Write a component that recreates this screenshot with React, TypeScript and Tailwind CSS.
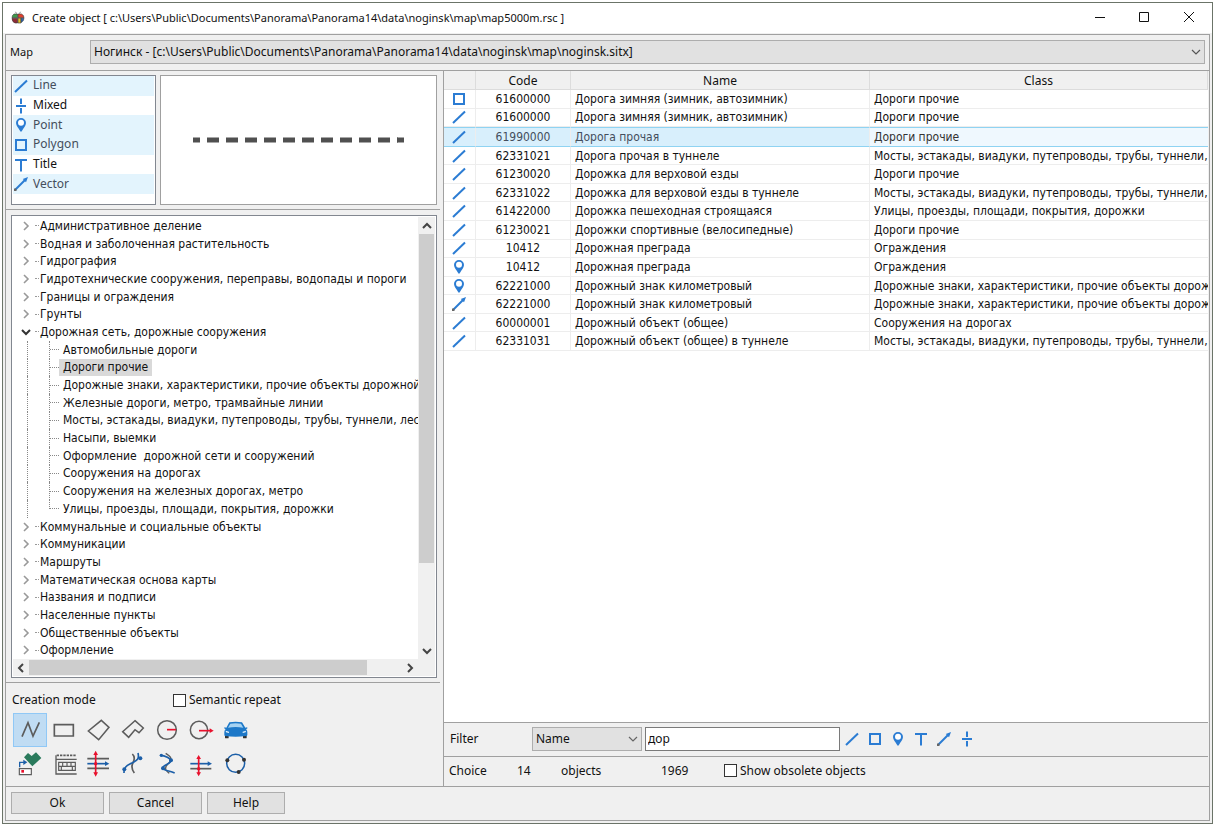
import { useState } from "react";
import type { ReactNode } from "react";
import clsx from "clsx";

type Kind = "line" | "mixed" | "point" | "polygon" | "title" | "vector";

const kinds: { kind: Kind; label: string; active: boolean }[] = [
  { kind: "line", label: "Line", active: true },
  { kind: "mixed", label: "Mixed", active: false },
  { kind: "point", label: "Point", active: true },
  { kind: "polygon", label: "Polygon", active: true },
  { kind: "title", label: "Title", active: false },
  { kind: "vector", label: "Vector", active: true },
];

const layers: { name: string; children?: string[] }[] = [
  { name: "Административное деление" },
  { name: "Водная и заболоченная растительность" },
  { name: "Гидрография" },
  { name: "Гидротехнические сооружения, переправы, водопады и пороги" },
  { name: "Границы и ограждения" },
  { name: "Грунты" },
  {
    name: "Дорожная сеть, дорожные сооружения",
    children: [
      "Автомобильные дороги",
      "Дороги прочие",
      "Дорожные знаки, характеристики, прочие объекты дорожной сети",
      "Железные дороги, метро, трамвайные линии",
      "Мосты, эстакады, виадуки, путепроводы, трубы, туннели, лестницы",
      "Насыпи, выемки",
      "Оформление  дорожной сети и сооружений",
      "Сооружения на дорогах",
      "Сооружения на железных дорогах, метро",
      "Улицы, проезды, площади, покрытия, дорожки",
    ],
  },
  { name: "Коммунальные и социальные объекты" },
  { name: "Коммуникации" },
  { name: "Маршруты" },
  { name: "Математическая основа карты" },
  { name: "Названия и подписи" },
  { name: "Населенные пункты" },
  { name: "Общественные объекты" },
  { name: "Оформление" },
];

const bridges = "Мосты, эстакады, виадуки, путепроводы, трубы, туннели, лестницы";
const signs = "Дорожные знаки, характеристики, прочие объекты дорожной сети";

const objects: { kind: Kind; code: string; name: string; cls: string }[] = [
  { kind: "polygon", code: "61600000", name: "Дорога зимняя (зимник, автозимник)", cls: "Дороги прочие" },
  { kind: "line", code: "61600000", name: "Дорога зимняя (зимник, автозимник)", cls: "Дороги прочие" },
  { kind: "line", code: "61990000", name: "Дорога прочая", cls: "Дороги прочие" },
  { kind: "line", code: "62331021", name: "Дорога прочая в туннеле", cls: bridges },
  { kind: "line", code: "61230020", name: "Дорожка для верховой езды", cls: "Дороги прочие" },
  { kind: "line", code: "62331022", name: "Дорожка для верховой езды в туннеле", cls: bridges },
  { kind: "line", code: "61422000", name: "Дорожка пешеходная строящаяся", cls: "Улицы, проезды, площади, покрытия, дорожки" },
  { kind: "line", code: "61230021", name: "Дорожки спортивные (велосипедные)", cls: "Дороги прочие" },
  { kind: "line", code: "10412", name: "Дорожная преграда", cls: "Ограждения" },
  { kind: "point", code: "10412", name: "Дорожная преграда", cls: "Ограждения" },
  { kind: "point", code: "62221000", name: "Дорожный знак километровый", cls: signs },
  { kind: "vector", code: "62221000", name: "Дорожный знак километровый", cls: signs },
  { kind: "line", code: "60000001", name: "Дорожный объект (общее)", cls: "Сооружения на дорогах" },
  { kind: "line", code: "62331031", name: "Дорожный объект (общее) в туннеле", cls: bridges },
];

const filterKinds: Kind[] = ["line", "polygon", "point", "title", "vector", "mixed"];

function KindIcon({ kind }: { kind: Kind }) {
  return (
    <svg viewBox="0 0 16 16" className="h-4 w-4 shrink-0" fill="none" stroke="#2b7cd3" strokeWidth="2">
      {kind === "line" && <path d="M2 14 14 2.500" />}
      {kind === "mixed" && <path d="M8 .5v5.500M3 8h10M8 10v5.500" />}
      {kind === "point" && (
        <>
          <path d="M8 1a5 5 0 0 0-5 5c0 3 2.700 5 3.800 7.500L8 15l1.200-1.500C10.300 11 13 9 13 6a5 5 0 0 0-5-5Z" fill="#2b7cd3" stroke="none" />
          <circle cx="8" cy="5.800" r="3" fill="#fff" stroke="none" />
        </>
      )}
      {kind === "polygon" && <path d="M3 3h10v10H3z" />}
      {kind === "title" && <path d="M2 3h12M8 3v11.500" />}
      {kind === "vector" && (
        <>
          <path d="M2.500 13.500 12 4" />
          <path d="M15 1 9.800 3l3.200 3.200z" fill="#2b7cd3" stroke="none" />
          <path d="M1 12.500h2.500V15H1z" fill="#666" stroke="none" />
        </>
      )}
    </svg>
  );
}

const gray = "#5c5c5c";
const red = "#e8112d";
const blue = "#1c5fa8";

const tools: { label: string; icon: ReactNode }[] = [
  {
    label: "Polyline",
    icon: <path d="M27 71 45 29l15 40 19-41" stroke={gray} strokeWidth="5" />,
  },
  { label: "Rectangle", icon: <path d="M22 35h57v34H22z" stroke={gray} strokeWidth="5" /> },
  { label: "Inclined rectangle", icon: <path d="m61 22 23 21-31 37-31-26z" stroke={gray} strokeWidth="4.500" /> },
  {
    label: "Complex rectangle",
    icon: <path d="m60 23 25 22-13 14-12-9-19 23-18-17z" stroke={gray} strokeWidth="4.500" />,
  },
  {
    label: "Circle",
    icon: (
      <>
        <circle cx="54" cy="51" r="28" stroke={gray} strokeWidth="4.500" />
        <path d="M54 50h27" stroke={red} strokeWidth="5" />
      </>
    ),
  },
  {
    label: "Circle by radius",
    icon: (
      <>
        <circle cx="48" cy="51" r="26" stroke={gray} strokeWidth="4.500" />
        <path d="M48 53h36" stroke={red} strokeWidth="5" />
        <path d="m92 53-12-7v14z" fill={red} />
      </>
    ),
  },
  {
    label: "Route",
    icon: (
      <>
        <path d="M24 66h11v8q0 2-2 2h-7q-2 0-2-2zM78 66h11v8q0 2-2 2h-7q-2 0-2-2z" fill="#333" />
        <path
          d="M37 28q19-3 38 0l10 16 5-1q3 2 0 4l-3 1q4 4 4 9v9q0 3-4 3-31 5-62 0-3 0-3-3v-9q0-5 4-9l-3-1q-3-2 0-4l5 1z"
          fill="#1d78c8"
        />
        <path d="M40 32q16-2 32 0l7 12q-23-4-46 0z" fill="#a5d2f2" />
        <path d="M26 53l10 3v4l-9-2zM87 53l-10 3v4l9-2z" fill="#e8f4fc" />
      </>
    ),
  },
  {
    label: "By template",
    icon: (
      <>
        <path d="m33 31 12-13 11 9 13-11 16 17-27 25z" fill="#2a7a5c" />
        <path d="M20 61V46h13" stroke={blue} strokeWidth="4" />
        <path d="m43 46-12-8v16z" fill={blue} />
        <path d="M19 65h36v18H19z" fill="#fff" stroke={gray} strokeWidth="3.500" />
        <path d="M25 69h8v8h-8z" fill={red} />
      </>
    ),
  },
  {
    label: "Keyboard input",
    icon: (
      <>
        <path d="M29 25h60" stroke={gray} strokeWidth="5" strokeDasharray="7 3" />
        <path d="M27 25v58M27 37h62M27 81h62" stroke={gray} strokeWidth="4" />
        <path d="M35 46h50v24H35zM35 58h50M47 46v12M60 46v12M72 46v12M43 58v12M76 58v12" stroke={gray} strokeWidth="3.500" />
      </>
    ),
  },
  {
    label: "Parallel lines",
    icon: (
      <>
        <path d="M19 35h65M19 64h65" stroke={gray} strokeWidth="5" />
        <path d="M19 50h56" stroke={blue} strokeWidth="5" />
        <path d="m85 50-13-7v14z" fill={blue} />
        <path d="M44 20v61" stroke={red} strokeWidth="5" />
        <path d="m44 11-7 13h14zM44 89l-7-13h14z" fill={red} />
        <circle cx="44" cy="50" r="5" fill={red} />
      </>
    ),
  },
  {
    label: "Copy of contour",
    icon: (
      <>
        <path d="M52 21c10 9 6 18 2 26s-6 18 4 31" stroke={gray} strokeWidth="5" />
        <path d="M27 78C26 58 38 55 51 48S74 38 69 18" stroke={blue} strokeWidth="5" />
        <circle cx="28" cy="67" r="6" fill={blue} />
        <circle cx="76" cy="34" r="6" fill={blue} />
      </>
    ),
  },
  {
    label: "Smoothed contour",
    icon: (
      <>
        <path d="M50 19c12 8 20 12 13 25-6 9-18 12-12 25 3 5 7 7 10 10" stroke={gray} strokeWidth="4" />
        <path d="M34 25c14 0 32 10 31 17-2 11-22 10-24 21 3 8 20 8 36 15" stroke={blue} strokeWidth="5" />
        <circle cx="37" cy="25" r="5" fill={blue} />
        <circle cx="66" cy="40" r="6" fill={blue} />
        <circle cx="42" cy="64" r="6" fill={blue} />
      </>
    ),
  },
  {
    label: "Parallel line",
    icon: (
      <>
        <path d="M22 65h63" stroke={gray} strokeWidth="5" />
        <path d="M22 50h56" stroke={blue} strokeWidth="5" />
        <path d="m87 50-13-7v14z" fill={blue} />
        <path d="M47 30v48" stroke={red} strokeWidth="5" />
        <path d="m47 24-7 12h14zM47 88l-7-12h14z" fill={red} />
        <circle cx="47" cy="65" r="5" fill={red} />
      </>
    ),
  },
  {
    label: "Circle by three points",
    icon: (
      <>
        <circle cx="56" cy="49" r="27" stroke={blue} strokeWidth="4.500" />
        <circle cx="31" cy="40" r="6" fill="#333" />
        <circle cx="81" cy="38" r="6" fill="#333" />
        <circle cx="65" cy="75" r="6" fill="#333" />
      </>
    ),
  },
];

function Chevron({ d, className }: { d: string; className?: string }) {
  return (
    <svg viewBox="0 0 10 10" className={clsx("h-[10px] w-[10px] shrink-0", className)} fill="none" stroke="currentColor">
      <path d={d} />
    </svg>
  );
}

const down = "M1 3 5 7l4-4";
const up = "M1 7 5 3l4 4";
const left = "M7 1 3 5l4 4";
const right = "M3 1l4 4-4 4";

function AppLogo() {
  return (
    <svg viewBox="0 0 14 14" className="h-[14px] w-[14px]" stroke="#3a3a3a" strokeWidth=".6">
      <path d="M4.500 .8 5.500 2.500M9.500 .8 8.500 2.500" />
      <path d="M3 3h3.500v3.800H1Q1 4 3 3Z" fill="#3f9a4c" />
      <path d="M7 3h3.500Q13 4 13 6.800H7Z" fill="#e0402f" />
      <path d="M1 7.200h5.600V12H4Q1 11 1 7.200Z" fill="#8e2b36" />
      <path d="M7 7.200h3V12H7Z" fill="#e9c32c" />
      <path d="M10 7.200h3Q13 10 10 11.500Z" fill="#2c66b5" />
    </svg>
  );
}

function TitleBar() {
  return (
    <header className="flex h-[30px] shrink-0 items-center bg-white pl-2">
      <AppLogo />
      <h1 className="ml-[7px] flex-1 truncate pb-px font-['Noto_Sans',sans-serif] text-[11px]">
        Create object [ c:\Users\Public\Documents\Panorama\Panorama14\data\noginsk\map\map5000m.rsc ]
      </h1>
      <button aria-label="Minimize" className="flex w-11 justify-center">
        <svg viewBox="0 0 12 12" className="h-3 w-3" stroke="#111"><path d="M1 5.500h10" /></svg>
      </button>
      <button aria-label="Maximize" className="flex w-11 justify-center">
        <svg viewBox="0 0 12 12" className="h-3 w-3" fill="none" stroke="#111"><path d="M1.500 .5h9v9h-9z" /></svg>
      </button>
      <button aria-label="Close" className="flex w-[46px] justify-center">
        <svg viewBox="0 0 12 12" className="h-3 w-3" stroke="#111"><path d="m1 0 10 10M11 0 1 10" /></svg>
      </button>
    </header>
  );
}

function LayerTree({ selected, onSelect }: { selected: string; onSelect: (name: string) => void }) {
  return (
    <div className="flex min-h-0 flex-1 flex-col border border-[#828790] bg-white p-px">
      <div className="flex min-h-0 flex-1">
        <ul className="flex h-[442px] min-w-0 flex-1 flex-col overflow-hidden whitespace-pre">
          {layers.flatMap((layer) => [
            <li key={layer.name} className="flex min-h-0 flex-1 items-center">
              <button className="flex items-center">
                <Chevron
                  d={layer.children ? down : right}
                  className={clsx("ml-2", layer.children ? "text-[#333] stroke-2" : "text-[#999] stroke-[1.6]")}
                />
                <span className="mr-px ml-1 w-1 border-t border-dotted border-[#999]" />
                {layer.name}
              </button>
            </li>,
            ...(layer.children ?? []).map((child, i, all) => (
              <li key={child} className="flex min-h-0 flex-1 items-center">
                <span className="ml-[14px] w-[22px] shrink-0 self-stretch border-l border-dotted border-[#888]" />
                <span
                  className={clsx(
                    "w-px shrink-0 border-l border-dotted border-[#888]",
                    i === all.length - 1 ? "h-1/2 self-start" : "self-stretch",
                  )}
                />
                <span className="w-[9px] shrink-0 border-t border-dotted border-[#888]" />
                <button
                  onClick={() => onSelect(child)}
                  className={clsx("h-full px-1 leading-4", child === selected && "bg-[#d9d9d9]")}
                >
                  {child}
                </button>
              </li>
            )),
          ])}
        </ul>
        <div className="flex w-[17px] flex-col items-center bg-[#f0f0f0] text-[#444]">
          <Chevron d={up} className="mt-1 mb-[3px] stroke-2" />
          <div className="h-[329px] w-[15px] bg-[#cdcdcd]" />
          <Chevron d={down} className="mt-auto mb-[3px] stroke-2" />
        </div>
      </div>
      <div className="flex h-[17px] shrink-0 items-center bg-[#f0f0f0] pr-5 pl-[3px] text-[#444]">
        <Chevron d={left} className="stroke-2" />
        <div className="ml-[3px] h-[15px] w-[338px] bg-[#cdcdcd]" />
        <Chevron d={right} className="ml-auto stroke-2" />
      </div>
    </div>
  );
}

function CreationMode() {
  const [tool, setTool] = useState("Polyline");

  return (
    <section className="h-[103px] shrink-0 pt-[6px] pl-[6px]">
      <div className="mb-[2px] flex h-[22px] items-center font-['Noto_Sans',sans-serif]">
        <span className="w-[161px]">Creation mode</span>
        <label className="flex items-center gap-[3px]">
          <input type="checkbox" className="h-[13px] w-[13px] appearance-none border border-[#333] bg-white" />
          Semantic repeat
        </label>
      </div>
      <div className="ml-px grid w-[238px] grid-cols-7">
        {tools.map(({ label, icon }) => (
          <button
            key={label}
            aria-label={label}
            aria-pressed={tool === label}
            onClick={() => setTool(label)}
            className={clsx("h-[34px] w-[34px]", tool === label && "bg-[#c0dcf3] outline -outline-offset-1 outline-[#90c8f6]")}
          >
            <svg viewBox="0 0 102 102" className="h-[34px] w-[34px]" fill="none">
              {icon}
            </svg>
          </button>
        ))}
      </div>
    </section>
  );
}

function ObjectTable({ selected, onSelect }: { selected: number; onSelect: (index: number) => void }) {
  return (
    <div className="min-h-0 flex-1 overflow-hidden bg-white">
      <table className="h-[280px] w-full table-fixed border-separate border-spacing-0">
        <colgroup>
          <col className="w-8" />
          <col className="w-[95px]" />
          <col className="w-[299px]" />
          <col />
        </colgroup>
        <thead>
          <tr className="h-[19px] bg-[#f0f0f0] font-['Noto_Sans',sans-serif] leading-[17px]">
            {["", "Code", "Name", "Class"].map((title) => (
              <th key={title} className="h-[19px] border-r border-b border-[#dcdcdc] p-0 font-normal">
                {title}
              </th>
            ))}
          </tr>
        </thead>
        <tbody>
          {objects.map((item, i) => {
            const active = i === selected;
            const cell = active ? "border-y border-[#8fd3f2] bg-[#d8effc] text-[#444e5c]" : "border-b border-b-[#ededed]";
            return (
              <tr key={i} onClick={() => onSelect(i)} className="leading-4">
                <td className={clsx("border-r border-r-[#ededed] p-0", cell)}>
                  <div className="flex justify-center pr-px"><KindIcon kind={item.kind} /></div>
                </td>
                <td className={clsx("border-r border-r-[#ededed] p-0 text-center", cell)}>{item.code}</td>
                <td className={clsx("truncate border-r border-r-[#ededed] p-0 pl-1", cell)}>{item.name}</td>
                <td
                  className={clsx(
                    "overflow-hidden p-0 pl-1 whitespace-nowrap",
                    active ? "border-y border-[#8fd3f2] bg-[#eff8fe] text-[#333]" : cell,
                  )}
                >
                  {item.cls}
                </td>
              </tr>
            );
          })}
        </tbody>
      </table>
    </div>
  );
}

export default function App() {
  const [layer, setLayer] = useState("Дороги прочие");
  const [row, setRow] = useState(2);
  const [filter, setFilter] = useState("дор");

  return (
    <div className="h-screen bg-white p-[2px] font-['DejaVu_Sans_Condensed','DejaVu_Sans',sans-serif] text-[12px] leading-4 text-[#111]">
      <div className="flex h-full flex-col border border-[#6b7468] bg-[#f0f0f0]">
        <TitleBar />
        <main className="mx-[2px] mt-px mb-[2px] flex min-h-0 flex-1 flex-col border border-[#a0a0a0]">
          <div className="flex h-9 shrink-0 items-center border-b border-[#a0a0a0] pr-1 pb-px pl-1">
            <label htmlFor="map" className="w-20 font-['Noto_Sans',sans-serif] text-[11px]">Map</label>
            <div className="relative flex-1">
              <select
                id="map"
                className="block h-6 w-full appearance-none border border-[#adadad] bg-[#e1e1e1] pl-[3px] font-['Noto_Sans',sans-serif]"
              >
                <option>Ногинск - [c:\Users\Public\Documents\Panorama\Panorama14\data\noginsk\map\noginsk.sitx]</option>
              </select>
              <Chevron d={down} className="pointer-events-none absolute top-[7px] right-1 text-[#555] stroke-[1.2]" />
            </div>
          </div>

          <div className="flex min-h-0 flex-1">
            <aside className="flex w-[437px] shrink-0 flex-col pr-[3px]">
              <section className="flex h-[139px] shrink-0 gap-1 border-b border-[#a0a0a0] pt-1 pr-[3px] pb-1 pl-[5px]">
                <ul className="flex w-[145px] flex-col border border-[#828790] bg-white px-px pb-[10px] font-['Noto_Sans',sans-serif]">
                  {kinds.map(({ kind, label, active }) => (
                    <li
                      key={kind}
                      className={clsx("flex flex-1 items-center gap-1", active && "bg-[#e3f4fd] text-[#444e5c]")}
                    >
                      <KindIcon kind={kind} />
                      <span className="pb-px">{label}</span>
                    </li>
                  ))}
                </ul>
                {/* Предпросмотр условного знака */}
                <div className="flex flex-1 items-center justify-center border border-[#a0a0a0] bg-white">
                  <svg viewBox="0 0 212 6" className="h-[6px] w-[212px]" stroke="#505050" strokeWidth="5">
                    <path d="M0 3h7M14 3h191" strokeDasharray="12 7" />
                    <path d="M204 3h7" />
                  </svg>
                </div>
              </section>

              <section className="flex min-h-0 flex-1 flex-col border-b border-[#a0a0a0] pt-[5px] pr-[3px] pb-1 pl-[5px]">
                <LayerTree selected={layer} onSelect={setLayer} />
              </section>

              <CreationMode />
            </aside>

            <section className="flex min-w-0 flex-1 flex-col border-l border-[#a0a0a0] pr-px">
              <ObjectTable selected={row} onSelect={setRow} />

              <div className="flex h-[34px] shrink-0 items-center border-t border-[#a0a0a0] pb-[2px] pl-[6px] font-['Noto_Sans',sans-serif]">
                <label htmlFor="field" className="w-[82px]">Filter</label>
                <div className="relative w-[110px]">
                  <select
                    id="field"
                    className="block h-6 w-full appearance-none border border-[#adadad] bg-[#e1e1e1] pl-[3px]"
                  >
                    <option>Name</option>
                  </select>
                  <Chevron d={down} className="pointer-events-none absolute top-[7px] right-1 text-[#666] stroke-[1.2]" />
                </div>
                <input
                  type="text"
                  aria-label="Filter text"
                  value={filter}
                  onChange={(e) => setFilter(e.target.value)}
                  className="ml-[3px] h-6 w-[195px] border border-[#7a7a7a] bg-white px-[2px] outline-none"
                />
                <div className="ml-1 flex gap-[7px]">
                  {filterKinds.map((kind) => (
                    <button key={kind} aria-label={kind}>
                      <KindIcon kind={kind} />
                    </button>
                  ))}
                </div>
              </div>

              <div className="flex h-[30px] shrink-0 items-center border-t border-[#a0a0a0] pb-[2px] pl-[5px] font-['Noto_Sans',sans-serif]">
                <span className="w-[68px]">Choice</span>
                <span className="w-11">14</span>
                <span className="w-[100px]">objects</span>
                <span className="w-[63px]">1969</span>
                <label className="flex items-center gap-[3px]">
                  <input type="checkbox" className="h-[13px] w-[13px] appearance-none border border-[#333] bg-white" />
                  Show obsolete objects
                </label>
              </div>
            </section>
          </div>

          <footer className="flex h-[34px] shrink-0 gap-[5px] border-t border-[#a0a0a0] pt-[5px] pl-[5px] font-['Noto_Sans',sans-serif]">
            <button className="h-[22px] w-[93px] border border-[#adadad] bg-[#e1e1e1]">Ok</button>
            <button className="h-[22px] w-[93px] border border-[#adadad] bg-[#e1e1e1]">Cancel</button>
            <button className="h-[22px] w-[78px] border border-[#adadad] bg-[#e1e1e1]">Help</button>
          </footer>
        </main>
      </div>
    </div>
  );
}
